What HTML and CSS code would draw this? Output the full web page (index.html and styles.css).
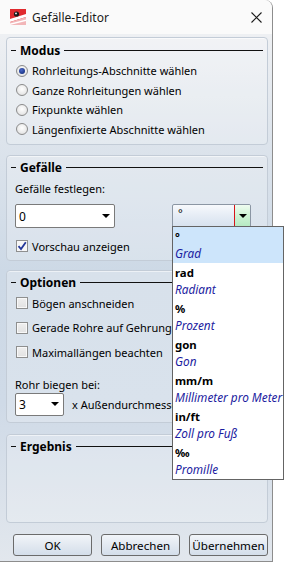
FILE: index.html
```html
<!DOCTYPE html>
<html lang="de">
<head>
<meta charset="utf-8">
<title>Gefälle-Editor</title>
<link rel="stylesheet" href="styles.css">
</head>
<body>
<div class="window">
  <div class="titlebar">
    <svg class="appicon" width="16" height="16" viewBox="0 0 16 16">
      <rect x="0" y="0" width="16" height="16" fill="#e02a2e"/>
      <polygon points="0,10 16,5 16,8 0,13" fill="#ffffff"/>
      <polygon points="0,13 16,8 16,16 0,16" fill="#f2b6b8"/>
      <polygon points="0,14.5 16,10.5 16,12 0,16" fill="#ffffff"/>
      <circle cx="6.5" cy="5" r="2.6" fill="#1a1a1a"/>
      <circle cx="6" cy="4.4" r="0.9" fill="#ffffff"/>
    </svg>
    <span class="title">Gefälle-Editor</span>
    <svg class="close" width="11" height="11" viewBox="0 0 11 11">
      <path d="M0.5 0.5 L10.5 10.5 M10.5 0.5 L0.5 10.5" stroke="#1a1a1a" stroke-width="1.1" fill="none"/>
    </svg>
  </div>
  <div class="client">
    <section class="group g-modus">
      <div class="ghead"><span class="dash"></span><span class="gtitle">Modus</span><span class="gline"></span></div>
      <div class="opt"><span class="radio on"></span>Rohrleitungs-Abschnitte wählen</div>
      <div class="opt"><span class="radio"></span>Ganze Rohrleitungen wählen</div>
      <div class="opt"><span class="radio"></span>Fixpunkte wählen</div>
      <div class="opt"><span class="radio"></span>Längenfixierte Abschnitte wählen</div>
    </section>
    <section class="group g-gefaelle">
      <div class="ghead"><span class="dash"></span><span class="gtitle">Gefälle</span><span class="gline"></span></div>
      <div class="label l-fest">Gefälle festlegen:</div>
      <div class="combos">
        <div class="combo c-val"><span>0</span><span class="arrow"></span></div>
        <div class="combo2"><span class="c2text">°</span><span class="c2btn"><span class="arrow"></span></span></div>
      </div>
      <div class="opt chk-row"><span class="check on"><svg width="10" height="10" viewBox="0 0 10 10"><path d="M1.5 5.2 L4 8 L8.8 1.2" stroke="#23379a" stroke-width="1.8" fill="none"/></svg></span>Vorschau anzeigen</div>
    </section>
    <section class="group g-optionen">
      <div class="ghead"><span class="dash"></span><span class="gtitle">Optionen</span><span class="gline"></span></div>
      <div class="opt crow"><span class="check"></span>Bögen anschneiden</div>
      <div class="opt crow"><span class="check"></span>Gerade Rohre auf Gehrung schneiden</div>
      <div class="opt crow"><span class="check"></span>Maximallängen beachten</div>
      <div class="label l-rohr">Rohr biegen bei:</div>
      <div class="bendrow">
        <div class="combo c-bend"><span>3</span><span class="arrow"></span></div>
        <span class="bendtxt">x Außendurchmesser</span>
      </div>
    </section>
    <section class="group g-ergebnis">
      <div class="ghead"><span class="dash"></span><span class="gtitle">Ergebnis</span><span class="gline"></span></div>
    </section>
    <div class="buttons">
      <button class="btn">OK</button>
      <button class="btn">Abbrechen</button>
      <button class="btn">Übernehmen</button>
    </div>
  </div>
  <ul class="droplist">
    <li class="item sel"><b>°</b><i>Grad</i></li>
    <li class="item"><b>rad</b><i>Radiant</i></li>
    <li class="item"><b>%</b><i>Prozent</i></li>
    <li class="item"><b>gon</b><i>Gon</i></li>
    <li class="item"><b>mm/m</b><i>Millimeter pro Meter</i></li>
    <li class="item"><b>in/ft</b><i>Zoll pro Fuß</i></li>
    <li class="item"><b>‰</b><i>Promille</i></li>
  </ul>
</div>
</body>
</html>
```
FILE: styles.css
```css
* { box-sizing: border-box; }
body {
  margin: 0;
  background: #ffffff;
  font-family: "Noto Sans", "Open Sans", sans-serif;
  font-size: 11px;
  color: #000;
  overflow: hidden;
}
.window {
  position: relative;
  width: 273px;
  height: 562px;
  border-right: 1px solid #8d8d8d;
  border-bottom: 1px solid #8d8d8d;
  border-top-right-radius: 8px;
  background: #f9f9f9;
}
.titlebar {
  display: flex;
  align-items: center;
  height: 34px;
  padding-left: 10px;
  padding-right: 10px;
  border-top-right-radius: 8px;
  background: #fafafa;
}
.appicon { display: block; margin-right: 6px; }
.title { font-size: 12px; color: #1a1a1a; }
.close { margin-left: auto; display: block; }

.client {
  height: 527px;
  padding: 3px 4px 0 6px;
  display: flex;
  flex-direction: column;
  background: linear-gradient(to bottom, #eef0f3 0%, #dde4ec 20%, #cdd9e6 45%, #cfdae7 70%, #e2e7ed 100%);
}
.group {
  border: 1px solid #c3ccd7;
  border-radius: 4px;
  background: rgba(255, 255, 255, 0.22);
  box-shadow: inset 0 1px 0 rgba(255, 255, 255, 0.55);
  padding-top: 4px;
  flex: none;
}
.g-modus { height: 108px; }
.g-gefaelle { height: 106px; margin-top: 10px; padding-top: 3px; }
.g-optionen { height: 153px; margin-top: 9px; padding-top: 3px; }
.g-ergebnis { height: 89px; margin-top: 11px; padding-top: 3px; }

.ghead {
  display: flex;
  align-items: center;
  height: 17px;
  padding-left: 4px;
  padding-right: 4px;
}
.dash { width: 5px; height: 1px; background: #111; }
.gtitle { font-weight: bold; font-size: 12px; margin-left: 4px; }
.gline { flex: 1; height: 1px; background: #111; margin-left: 4px; }

.g-modus .ghead { margin-bottom: 2px; }
.opt {
  display: flex;
  align-items: center;
  height: 19.5px;
  padding-left: 9px;
  white-space: nowrap;
}
.radio {
  width: 12px;
  height: 12px;
  border-radius: 50%;
  border: 1px solid #8b8b8b;
  background: radial-gradient(circle at 50% 40%, #ffffff 0%, #eaeaea 60%, #d6d6d6 100%);
  margin-right: 4px;
  display: flex;
  align-items: center;
  justify-content: center;
  flex: none;
}
.radio.on::after {
  content: "";
  width: 6px;
  height: 6px;
  border-radius: 50%;
  background: radial-gradient(circle at 40% 35%, #4a67c9 0%, #15307f 80%);
}
.check {
  width: 12px;
  height: 12px;
  border: 1px solid #8e8f8f;
  background: linear-gradient(to bottom, #efefef, #e2e2e2);
  box-shadow: inset 0 0 0 1px #f8f8f8;
  margin-right: 4px;
  flex: none;
  display: flex;
  align-items: center;
  justify-content: center;
}
.check.on { background: #f6f6f6; }
.check svg { display: block; }

.label { padding-left: 8px; height: 16px; line-height: 16px; }
.l-fest { margin-top: 5px; }
.combos { display: flex; margin-top: 7px; height: 24px; }
.combo {
  display: flex;
  align-items: center;
  justify-content: space-between;
  height: 24px;
  border: 1px solid #7a7a7a;
  border-radius: 2px;
  background: #ffffff;
  padding: 0 4px 0 3px;
  font-size: 12px;
}
.c-val { width: 100px; margin-left: 8px; }
.arrow {
  width: 0;
  height: 0;
  border-left: 4px solid transparent;
  border-right: 4px solid transparent;
  border-top: 4px solid #000;
}
.combo2 {
  display: flex;
  width: 79px;
  height: 24px;
  margin-left: 57px;
  border: 1px solid #8b96a3;
  border-radius: 2px;
  background: linear-gradient(to bottom, #f7f9fc 0%, #e5ecf5 50%, #d6e1ee 100%);
  overflow: hidden;
}
.c2text { flex: 1; padding-left: 5px; font-size: 11px; line-height: 16px; }
.c2btn {
  width: 16px;
  border-left: 1px solid #d7141a;
  background: linear-gradient(to bottom, #effcf0 0%, #cdf3d4 50%, #b4e9c1 100%);
  display: flex;
  align-items: center;
  justify-content: center;
}
.chk-row { margin-top: 9px; height: 18px; }

.crow { height: 24.5px; }
.l-rohr { margin-top: 12px; }
.bendrow { display: flex; align-items: center; height: 23px; }
.c-bend { width: 49px; height: 23px; margin-left: 8px; flex: none; }
.bendtxt { margin-left: 8px; white-space: nowrap; }

.buttons {
  display: flex;
  gap: 9px;
  margin-top: 11px;
  padding-left: 7px;
}
.btn {
  width: 79px;
  height: 22px;
  border: 1px solid #6b6b6b;
  border-radius: 3px;
  background: linear-gradient(to bottom, #f2f5f9 0%, #e3e9f1 50%, #d4deea 100%);
  font-family: "Noto Sans", "Open Sans", sans-serif;
  font-size: 11.6px;
  color: #000;
  padding: 0;
}

.droplist {
  position: absolute;
  left: 172px;
  top: 226px;
  width: 112px;
  margin: 0;
  padding: 0;
  list-style: none;
  border: 1px solid #646464;
  background: #ffffff;
}
.item {
  height: 36px;
  padding: 1px 0 0 2px;
  display: flex;
  flex-direction: column;
  white-space: nowrap;
}
.item.sel { background: #cde5fb; }
.item b { font-weight: bold; line-height: 17px; font-size: 11.4px; }
.item i { color: #1c1ca0; line-height: 17px; font-size: 11.8px; }
```
